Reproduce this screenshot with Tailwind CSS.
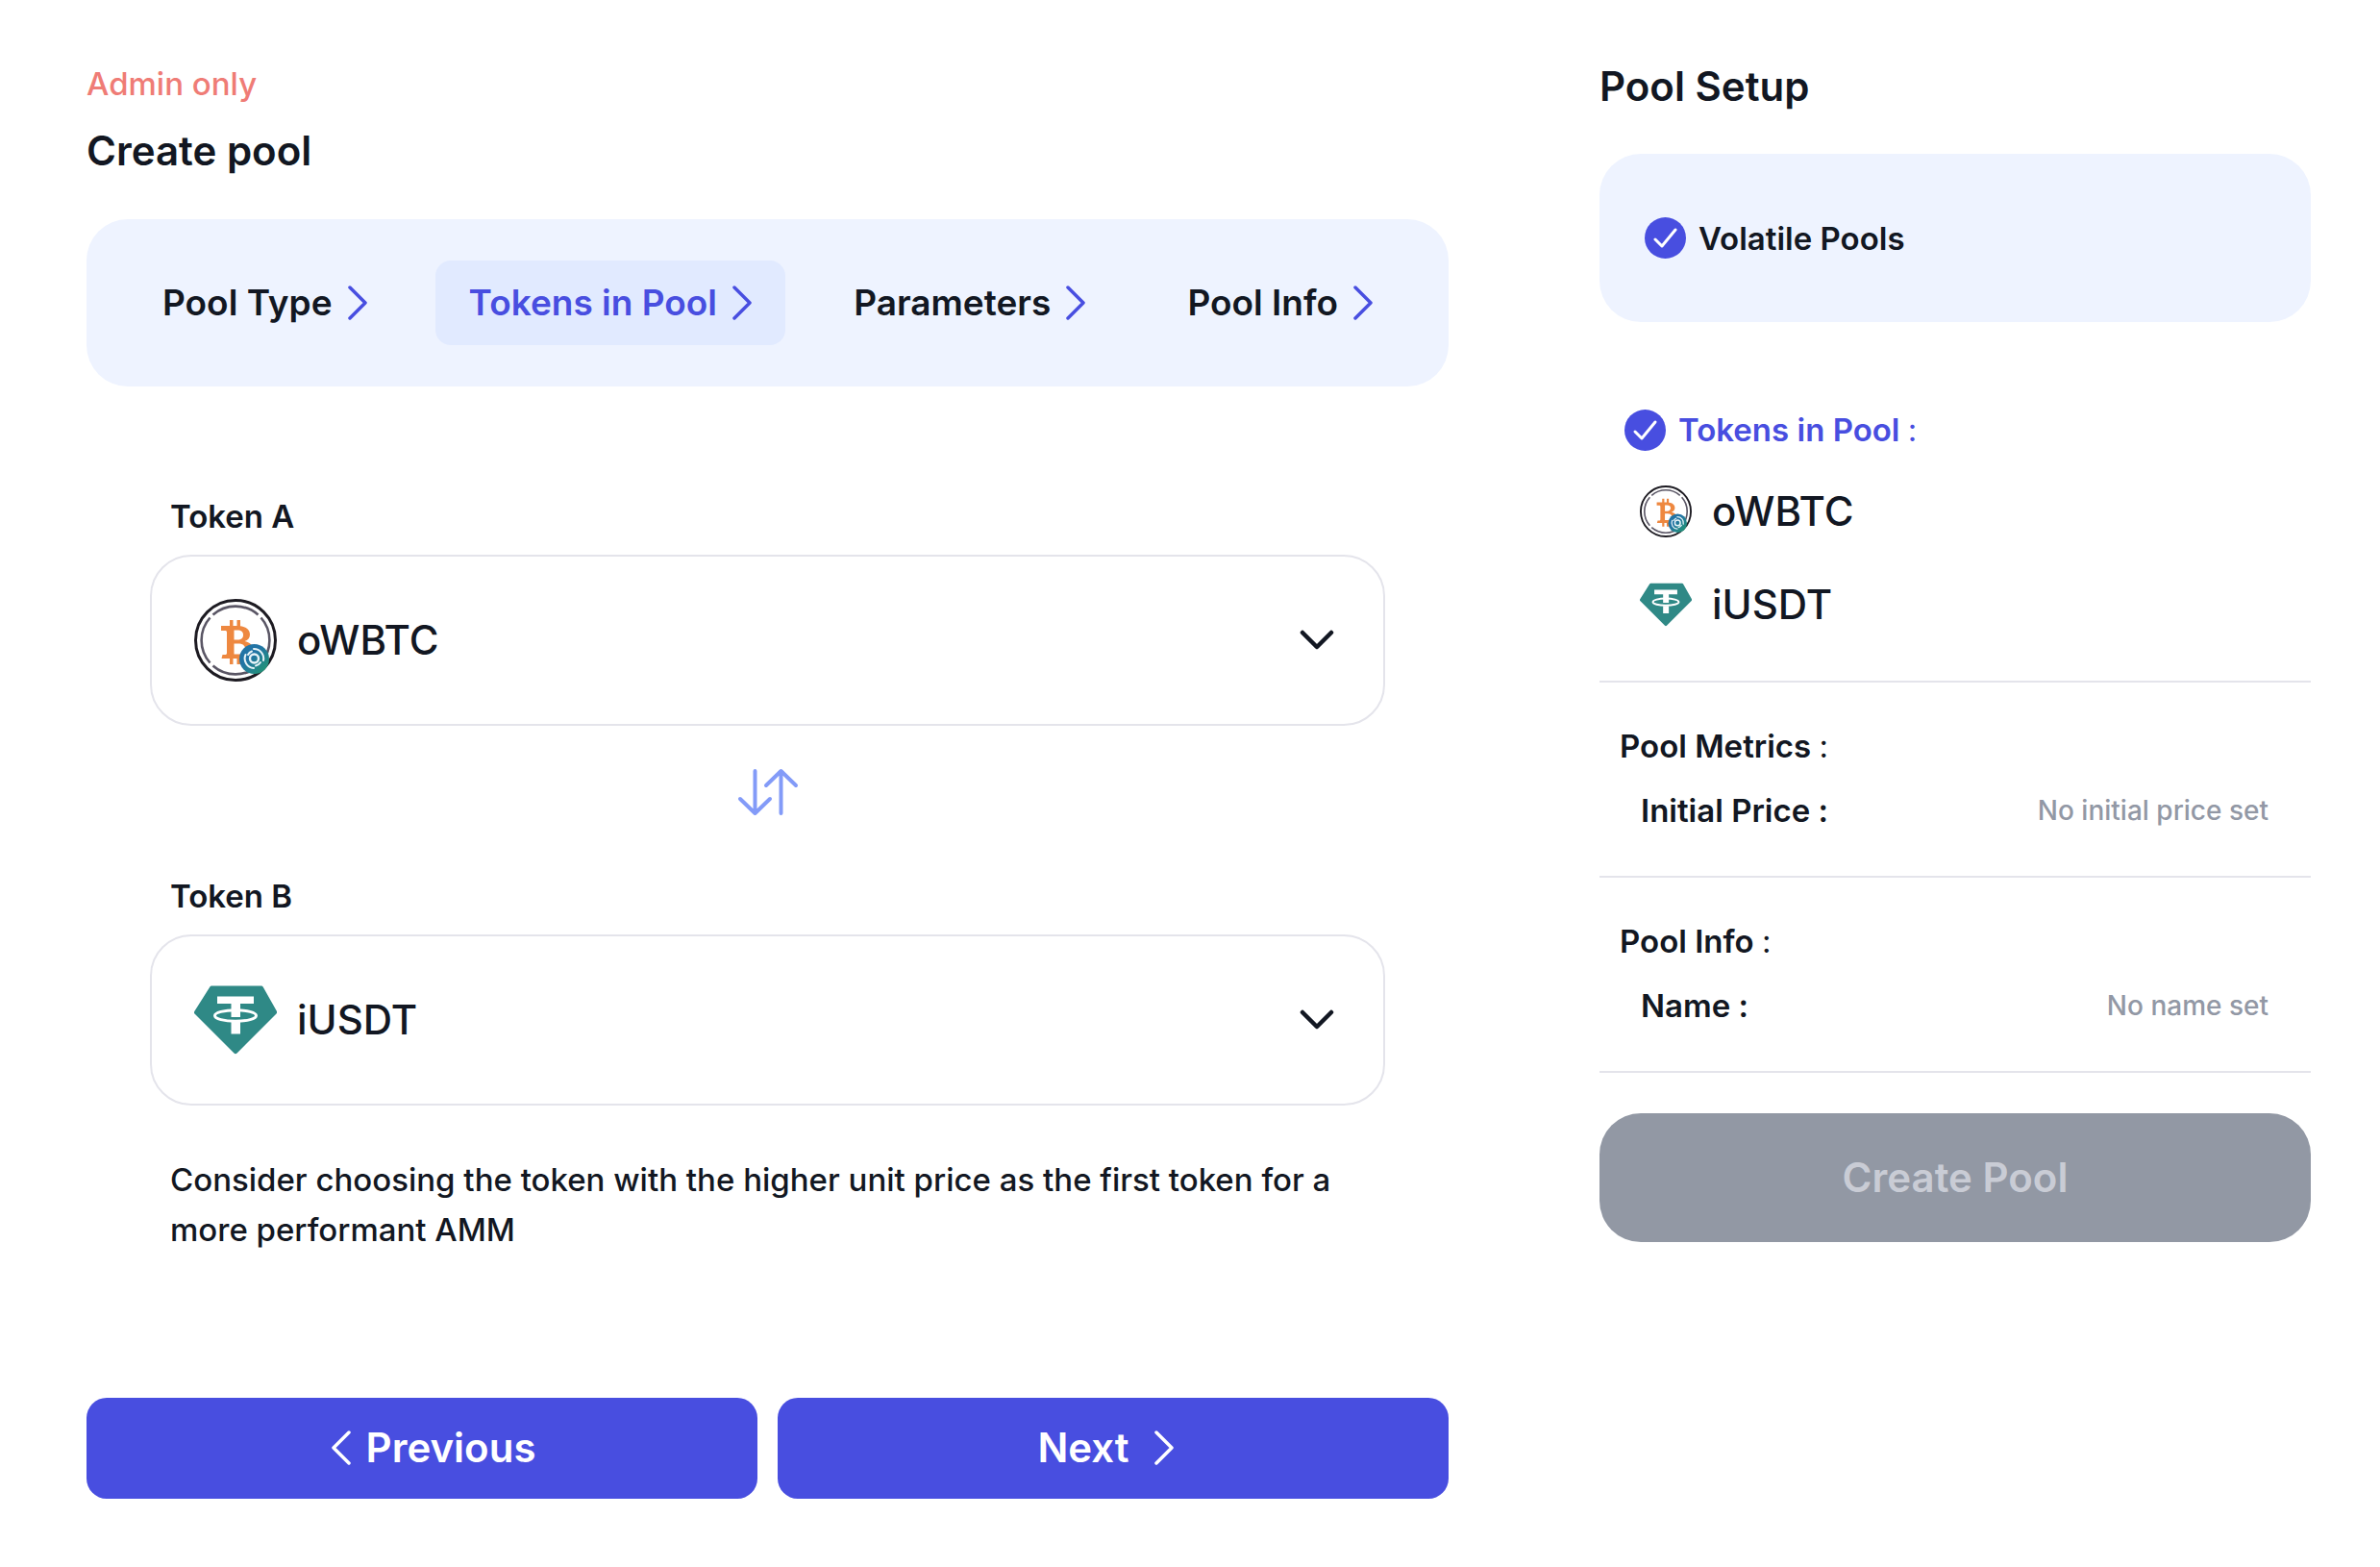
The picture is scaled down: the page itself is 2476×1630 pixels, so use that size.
<!DOCTYPE html>
<html lang="en">
<head>
<meta charset="utf-8">
<meta name="viewport" content="width=device-width, initial-scale=1">
<title>Create pool</title>
<script src="https://cdn.jsdelivr.net/npm/@tailwindcss/browser@4"></script>
</head>
<body class="bg-white font-[Inter,sans-serif] text-[#121722]">

<!-- Shared icon shapes -->
<svg class="absolute size-0" aria-hidden="true">
  <defs>
    <linearGradient id="badge" x1="0" y1="0" x2="1" y2="1"><stop offset="0.400" stop-color="#2274a5"/><stop offset="0.900" stop-color="#239474"/></linearGradient>
  </defs>
  <symbol id="chevron-right" viewBox="0 0 20 36"><path d="M2 2 L18 18 L2 34" fill="none" stroke="currentColor" stroke-width="3.500" stroke-linecap="round" stroke-linejoin="round"/></symbol>
  <symbol id="chevron-down" viewBox="0 0 36 22"><path d="M3 3 L18 18 L33 3" fill="none" stroke="currentColor" stroke-width="4.500" stroke-linecap="round" stroke-linejoin="round"/></symbol>
  <symbol id="check" viewBox="0 0 43 43"><circle cx="21.500" cy="21.500" r="21.500" fill="#484ee0"/><path d="M11 23 L18 30 L32 13" fill="none" stroke="#fff" stroke-width="3" stroke-linecap="round" stroke-linejoin="round"/></symbol>
  <symbol id="wbtc" viewBox="0 0 86 86">
    <circle cx="43" cy="43" r="41.500" fill="#fff" stroke="#1d1b22" stroke-width="3"/>
    <g fill="none" stroke="#5a5665" stroke-width="2.600">
      <path d="M19.500 16.500 A35.500 35.500 0 0 1 66.500 16.500"/>
      <path d="M69.500 19.500 A35.500 35.500 0 0 1 69.500 66.500"/>
      <path d="M66.500 69.500 A35.500 35.500 0 0 1 19.500 69.500"/>
      <path d="M16.500 66.500 A35.500 35.500 0 0 1 16.500 19.500"/>
    </g>
    <path fill="#ee8840" fill-rule="evenodd" d="M28 28 H37 V22 H40.500 V28 H44.500 V22 H48 V28.300 C54 29 58 32 58 37 C58 40.500 56 43 52.500 44 C58 45 61 48 61 53 C61 58.500 56 61.500 48 62 V68 H44.500 V62 H40.500 V68 H37 V62 H28.500 L29.500 58 H32 C33.500 58 34 57.500 34 56 V35 C34 33.500 33.500 33 32 33 H28 Z M41.500 32.500 V42.500 H45 C49 42.500 51 40.800 51 37.500 C51 34 49 32.500 45 32.500 Z M41.500 46.500 V57.500 H45.500 C50.500 57.500 53 55.700 53 52 C53 48.300 50.500 46.500 45.500 46.500 Z"/>
    <circle cx="62.500" cy="62.500" r="15.500" fill="url(#badge)"/>
    <circle cx="62.500" cy="62" r="4.500" fill="none" stroke="#e8f4f8" stroke-width="2.400"/>
    <g fill="none" stroke="#e8f4f8" stroke-width="2" stroke-linecap="round">
      <path d="M62 52 A10 10 0 0 1 72 64"/><path d="M62 72 A10 10 0 0 1 53.500 58"/>
      <path d="M69 66 A8 8 0 0 1 64 69.500"/><path d="M56 58 A8 8 0 0 1 60 54.500"/>
    </g>
  </symbol>
  <symbol id="usdt" viewBox="0 0 86 86">
    <path fill="#2f8986" d="M18 7.500 H70 Q71 7.500 71.600 8.500 L86 34 Q86.500 35.500 85.500 36.500 L44.500 77.500 Q43 79 41.500 77.500 L0.500 36.500 Q-0.500 35.500 0.300 34 L16.400 8.500 Q17 7.500 18 7.500 Z"/>
    <ellipse cx="43" cy="38.500" rx="21.500" ry="5.800" fill="none" stroke="#fff" stroke-width="3"/>
    <path fill="#fff" d="M24 18.500 H62 V26 H48 V40 H38.500 V26 H24 Z M38.500 45 H48 V57.500 H38.500 Z"/>
  </symbol>
</svg>

<div class="grid grid-cols-[minmax(0,1417fr)_minmax(0,740fr)] items-start gap-[157px] pt-[62px] pr-[72px] pb-[70px] pl-[90px]">

  <main>
    <p class="pt-px text-[33px] leading-[48px] font-medium text-[#ef7c76]">Admin only</p>
    <h1 class="mt-[18px] text-[42px] leading-[56px] font-semibold">Create pool</h1>

    <nav aria-label="Steps" class="mt-[43px] flex justify-between rounded-[43px] bg-[#eef3ff] px-[44px] py-[43px] text-[37px] leading-[48px] font-semibold">
      <a href="#type" class="flex h-[88px] items-center gap-4 rounded-2xl px-[35px]">Pool Type <svg class="h-9 w-5 text-[#484ee0]"><use href="#chevron-right"/></svg></a>
      <a href="#tokens" aria-current="step" class="flex h-[88px] items-center gap-4 rounded-2xl bg-[#e1eaff] px-[35px] text-[#484ee0]">Tokens in Pool <svg class="h-9 w-5"><use href="#chevron-right"/></svg></a>
      <a href="#parameters" class="flex h-[88px] items-center gap-4 rounded-2xl px-[35px]">Parameters <svg class="h-9 w-5 text-[#484ee0]"><use href="#chevron-right"/></svg></a>
      <a href="#info" class="flex h-[88px] items-center gap-4 rounded-2xl px-[35px]">Pool Info <svg class="h-9 w-5 text-[#484ee0]"><use href="#chevron-right"/></svg></a>
    </nav>

    <form class="mt-[111px] px-[66px]">
      <label for="token-a" class="block px-[21px] text-[33px] leading-[48px] font-semibold">Token A</label>
      <div class="mt-4 flex h-[178px] items-center rounded-[43px] border-2 border-[#e4e4eb] pr-[51px] pl-[44px]">
        <svg class="size-[86px] shrink-0"><use href="#wbtc"/></svg>
        <select id="token-a" class="h-full min-w-0 flex-1 appearance-none bg-transparent pb-[2px] pl-[21px] text-[42px] font-medium outline-none">
          <option>oWBTC</option>
          <option>iUSDT</option>
        </select>
        <svg class="h-[22px] w-9 shrink-0"><use href="#chevron-down"/></svg>
      </div>

      <button type="button" aria-label="Swap tokens" class="mx-auto mt-[44px] block text-[#839bf8]">
        <svg class="h-[50px] w-16" viewBox="0 0 64 50" fill="none" stroke="currentColor" stroke-width="4" stroke-linecap="round" stroke-linejoin="round"><path d="M18.500 3 V47 M3 32 L18.500 47 L34 32 M45.500 47 V3 M30 18 L45.500 3 L61 18"/></svg>
      </button>

      <label for="token-b" class="mt-[59px] block px-[21px] text-[33px] leading-[48px] font-semibold">Token B</label>
      <div class="mt-4 flex h-[178px] items-center rounded-[43px] border-2 border-[#e4e4eb] pr-[51px] pl-[44px]">
        <svg class="size-[86px] shrink-0"><use href="#usdt"/></svg>
        <select id="token-b" class="h-full min-w-0 flex-1 appearance-none bg-transparent pb-[2px] pl-[21px] text-[42px] font-medium outline-none">
          <option>iUSDT</option>
          <option>oWBTC</option>
        </select>
        <svg class="h-[22px] w-9 shrink-0"><use href="#chevron-down"/></svg>
      </div>

      <p class="mt-[51px] px-[21px] text-[33px] leading-[52px] font-medium">Consider choosing the token with the higher unit price as the first token for a more performant AMM</p>
    </form>

    <div class="mt-[149px] grid grid-cols-2 gap-[21px] text-[42px] leading-[56px] font-semibold text-white">
      <button type="button" class="flex h-[105px] items-center justify-center gap-4 rounded-[21px] bg-[#484ee0] pb-[2px] pl-6"><svg class="h-9 w-5 rotate-180"><use href="#chevron-right"/></svg>Previous</button>
      <button type="button" class="flex h-[105px] items-center justify-center gap-[26px] rounded-[21px] bg-[#484ee0] pr-4 pb-[2px]">Next<svg class="h-9 w-5"><use href="#chevron-right"/></svg></button>
    </div>
  </main>

  <aside class="text-[33px] leading-[48px]">
    <h2 class="text-[42px] leading-[56px] font-semibold">Pool Setup</h2>

    <div class="mt-[42px] flex h-[175px] items-center gap-[13px] rounded-[43px] bg-[#eef3ff] px-[47px] font-semibold">
      <svg class="size-[43px]"><use href="#check"/></svg>
      Volatile Pools
    </div>

    <section class="mt-[88px] pb-[52px] pl-[26px]">
      <h3 class="flex items-center gap-[13px] font-semibold text-[#484ee0]">
        <svg class="size-[43px]"><use href="#check"/></svg>
        <span>Tokens in Pool <span class="font-normal">:</span></span>
      </h3>
      <ul class="mt-[34px] flex flex-col gap-[43px] pl-4 text-[42px] leading-[54px] font-medium">
        <li class="flex items-center gap-[21px]"><svg class="size-[54px]"><use href="#wbtc"/></svg>oWBTC</li>
        <li class="flex items-center gap-[21px]"><svg class="size-[54px]"><use href="#usdt"/></svg>iUSDT</li>
      </ul>
    </section>

    <section class="border-t-2 border-[#e4e4eb] pt-[42px] pb-[44px] pl-[21px]">
      <h3 class="font-semibold">Pool Metrics <span class="font-normal">:</span></h3>
      <dl class="mt-[19px] flex justify-between pr-[44px] pl-[22px]">
        <dt class="font-semibold">Initial Price :</dt>
        <dd class="text-[28px] font-medium text-[#9298a5]">No initial price set</dd>
      </dl>
    </section>

    <section class="border-y-2 border-[#e4e4eb] pt-[42px] pb-[44px] pl-[21px]">
      <h3 class="font-semibold">Pool Info <span class="font-normal">:</span></h3>
      <dl class="mt-[19px] flex justify-between pr-[44px] pl-[22px]">
        <dt class="font-semibold">Name :</dt>
        <dd class="text-[28px] font-medium text-[#9298a5]">No name set</dd>
      </dl>
    </section>

    <button type="button" disabled class="mt-[42px] h-[134px] w-full rounded-[43px] bg-[#9298a4] text-[42px] leading-[56px] font-semibold text-[#c9ccd5]">Create Pool</button>
  </aside>
</div>
</body>
</html>
